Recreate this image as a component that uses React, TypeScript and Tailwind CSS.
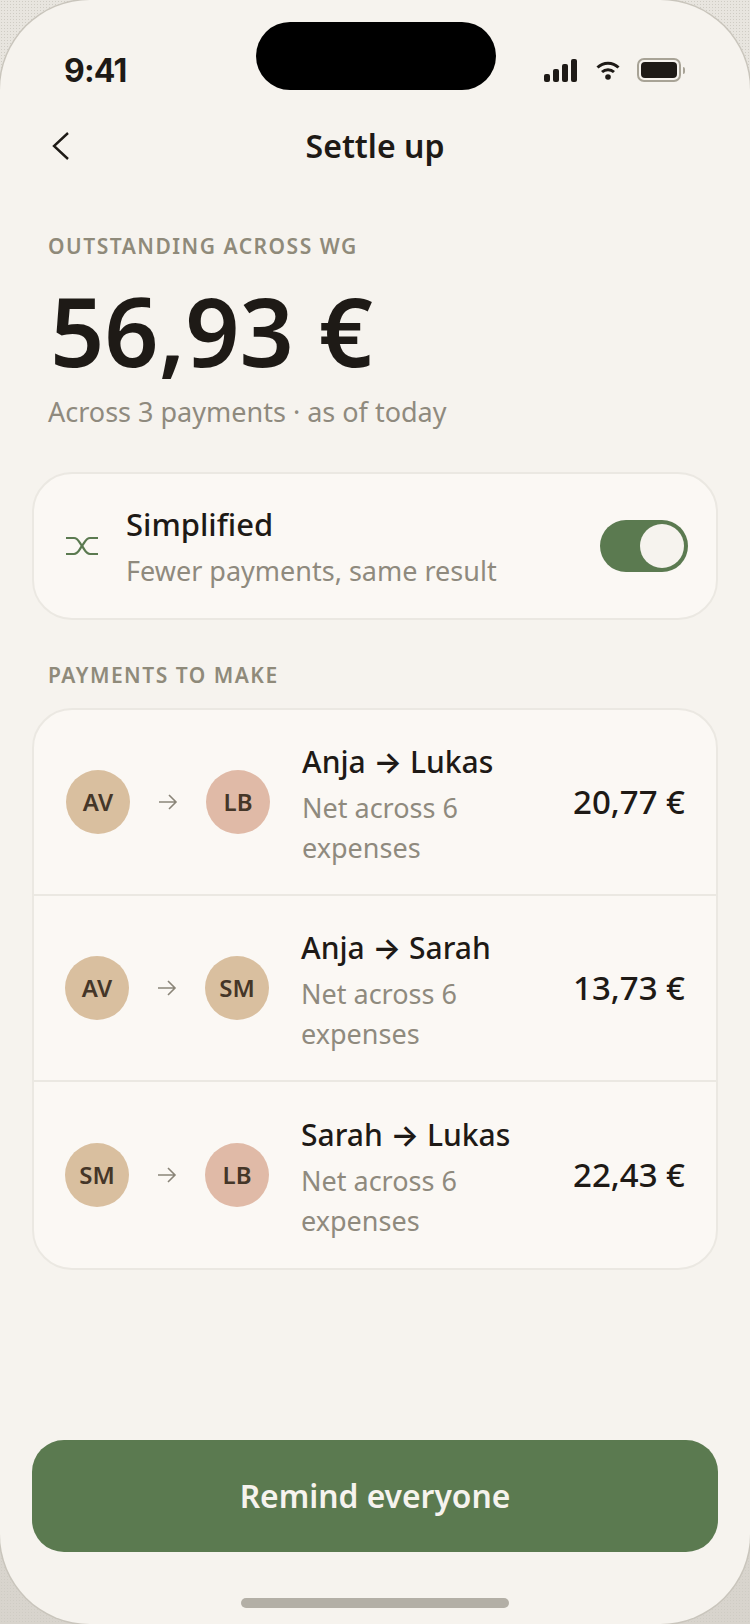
const F = "font-['Noto_Sans',sans-serif]";

function Avatar({ t, c }: { t: string; c: string }) {
  return (
    <div className={`w-[64px] h-[64px] rounded-full flex items-center justify-center text-[24px] font-semibold text-[#453628] ${c}`}>{t}</div>
  );
}

function Row({ a, ac, b, bc, name, amt, h }: { a: string; ac: string; b: string; bc: string; name: string; amt: string; h: string }) {
  return (
    <div className={`flex items-center pl-[31px] pr-[31px] ${h}`}>
      <Avatar t={a} c={ac} />
      <svg width="20" height="18" viewBox="0 0 20 18" fill="none" stroke="#8a8578" strokeWidth="1.6" className="mx-[28px] w-[20px] shrink-0">
        <path d="M1 9h17M11 2l7 7-7 7" />
      </svg>
      <Avatar t={b} c={bc} />
      <div className="ml-[32px] w-[240px] pt-[5px]">
        <div className="text-[30px] leading-[40px] font-medium text-[#1e1a16]">
          {name.split(" → ")[0]} <span className="font-['Inter',sans-serif] font-semibold">→</span> {name.split(" → ")[1]}
        </div>
        <div className="text-[27px] leading-[40px] mt-[6px] text-[#8f8a7e]">Net across 6<br />expenses</div>
      </div>
      <div className="ml-auto text-[33px] font-medium text-[#1e1a16] whitespace-nowrap">{amt}</div>
    </div>
  );
}

export default function App() {
  return (
    <div className={`w-[750px] h-[1624px] overflow-hidden bg-[radial-gradient(#cfccc4_1px,transparent_1px),linear-gradient(#e8e5df,#d8d4cd)] bg-[size:3px_3px,100%_100%] ${F}`}>
      <div className="relative w-[750px] h-[1624px] rounded-[90px] shadow-[0_0_0_1.5px_#c9c5bc] bg-[#f6f3ee] overflow-hidden flex flex-col">
        <div className="absolute left-[256px] top-[22px] w-[240px] h-[68px] rounded-full bg-black" />
        <div className="flex items-center justify-between h-[74px] mt-[33px] pl-[64px] pr-[65px] shrink-0">
          <span className="font-['Inter',sans-serif] text-[32px] font-bold text-[#1e1a16] tracking-[-0.8px] pt-[2px]">9:41</span>
          <div className="flex items-center">
            <svg width="33" height="23" viewBox="0 0 33 23" fill="#1e1a16">
              <rect x="0" y="15" width="6" height="8" rx="2" />
              <rect x="9" y="10" width="6" height="13" rx="2" />
              <rect x="18" y="5" width="6" height="18" rx="2" />
              <rect x="27" y="0" width="6" height="23" rx="2" />
            </svg>
            <svg width="24" height="20" viewBox="0 0 24 20" fill="none" stroke="#1e1a16" strokeWidth="3" className="ml-[19px] mr-[17px]">
              <path d="M1.5 7.5a15 15 0 0 1 21 0M6 12a9 9 0 0 1 12 0" />
              <circle cx="12" cy="17" r="2.8" fill="#1e1a16" stroke="none" />
            </svg>
            <div className="flex items-center gap-[2px]">
              <div className="w-[44px] h-[24px] rounded-[7px] border-2 border-[#a8a396] p-[2px]">
                <div className="w-full h-full rounded-[4px] bg-[#1e1a16]" />
              </div>
              <div className="w-[2px] h-[7px] rounded-r-full bg-[#a8a396]" />
            </div>
          </div>
        </div>

        <div className="relative flex items-center justify-center h-[66px] mt-[6px] shrink-0">
          <svg width="18" height="30" viewBox="0 0 18 30" fill="none" stroke="#1e1a16" strokeWidth="2.4" className="absolute left-[52px] top-[18px]">
            <path d="M16 2 2 15l14 13" />
          </svg>
          <span className="text-[32px] font-semibold text-[#1e1a16]">Settle up</span>
        </div>

        <div className="pl-[48px] mt-[53px] text-[21px] font-semibold tracking-[1.5px] text-[#8f8a7a] leading-[28px]">OUTSTANDING ACROSS WG</div>
        <div className="pl-[50px] mt-[15px] text-[95px] leading-[110px] font-semibold text-[#1e1a16]">56,93 €</div>
        <div className="pl-[48px] mt-[7px] text-[27px] leading-[40px] text-[#8f8a7e]">Across 3 payments · as of today</div>

        <div className="mx-[32px] mt-[40px] h-[148px] rounded-[40px] border-2 border-[#ebe8e2] bg-[#fbf8f4] flex items-center pl-[32px] pr-[28px] shrink-0">
          <svg width="32" height="20" viewBox="0 0 32 20" fill="none" stroke="#5b7a50" strokeWidth="2.2" className="shrink-0">
            <path d="M0 2h8c4 0 5 4 8 8s4 8 8 8h8M0 18h8c4 0 5-4 8-8s4-8 8-8h8" />
          </svg>
          <div className="ml-[28px] pt-[2px]">
            <div className="text-[31px] leading-[40px] font-medium text-[#1e1a16]">Simplified</div>
            <div className="text-[27px] leading-[40px] mt-[7px] text-[#8f8a7e]">Fewer payments, same result</div>
          </div>
          <div className="ml-auto w-[88px] h-[52px] rounded-full bg-[#5b7a50] flex items-center justify-end pr-[4px]">
            <div className="w-[44px] h-[44px] rounded-full bg-[#f6f3ee]" />
          </div>
        </div>

        <div className="pl-[48px] mt-[41px] text-[21px] font-semibold tracking-[1.5px] text-[#8f8a7a] leading-[28px]">PAYMENTS TO MAKE</div>

        <div className="mx-[32px] mt-[19px] rounded-[40px] border-2 border-[#ebe8e2] bg-[#fbf8f4] shrink-0 divide-y-2 divide-[#ebe8e2]">
          <Row a="AV" ac="bg-[#d9bf9f]" b="LB" bc="bg-[#e0baa7]" name="Anja → Lukas" amt="20,77 €" h="h-[186px] pl-[32px]" />
          <Row a="AV" ac="bg-[#d9bf9f]" b="SM" bc="bg-[#d9bf9f]" name="Anja → Sarah" amt="13,73 €" h="h-[186px]" />
          <Row a="SM" ac="bg-[#d9bf9f]" b="LB" bc="bg-[#e0baa7]" name="Sarah → Lukas" amt="22,43 €" h="h-[186px]" />
        </div>

        <div className="mt-auto mx-[32px] h-[112px] rounded-[32px] bg-[#5b7a50] flex items-center justify-center text-[31.8px] font-semibold text-[#f6f3ee] shrink-0">Remind everyone</div>
        <div className="mx-auto mt-[46px] mb-[16px] w-[268px] h-[10px] rounded-full bg-[#b3afa6] shrink-0" />
      </div>
    </div>
  );
}
